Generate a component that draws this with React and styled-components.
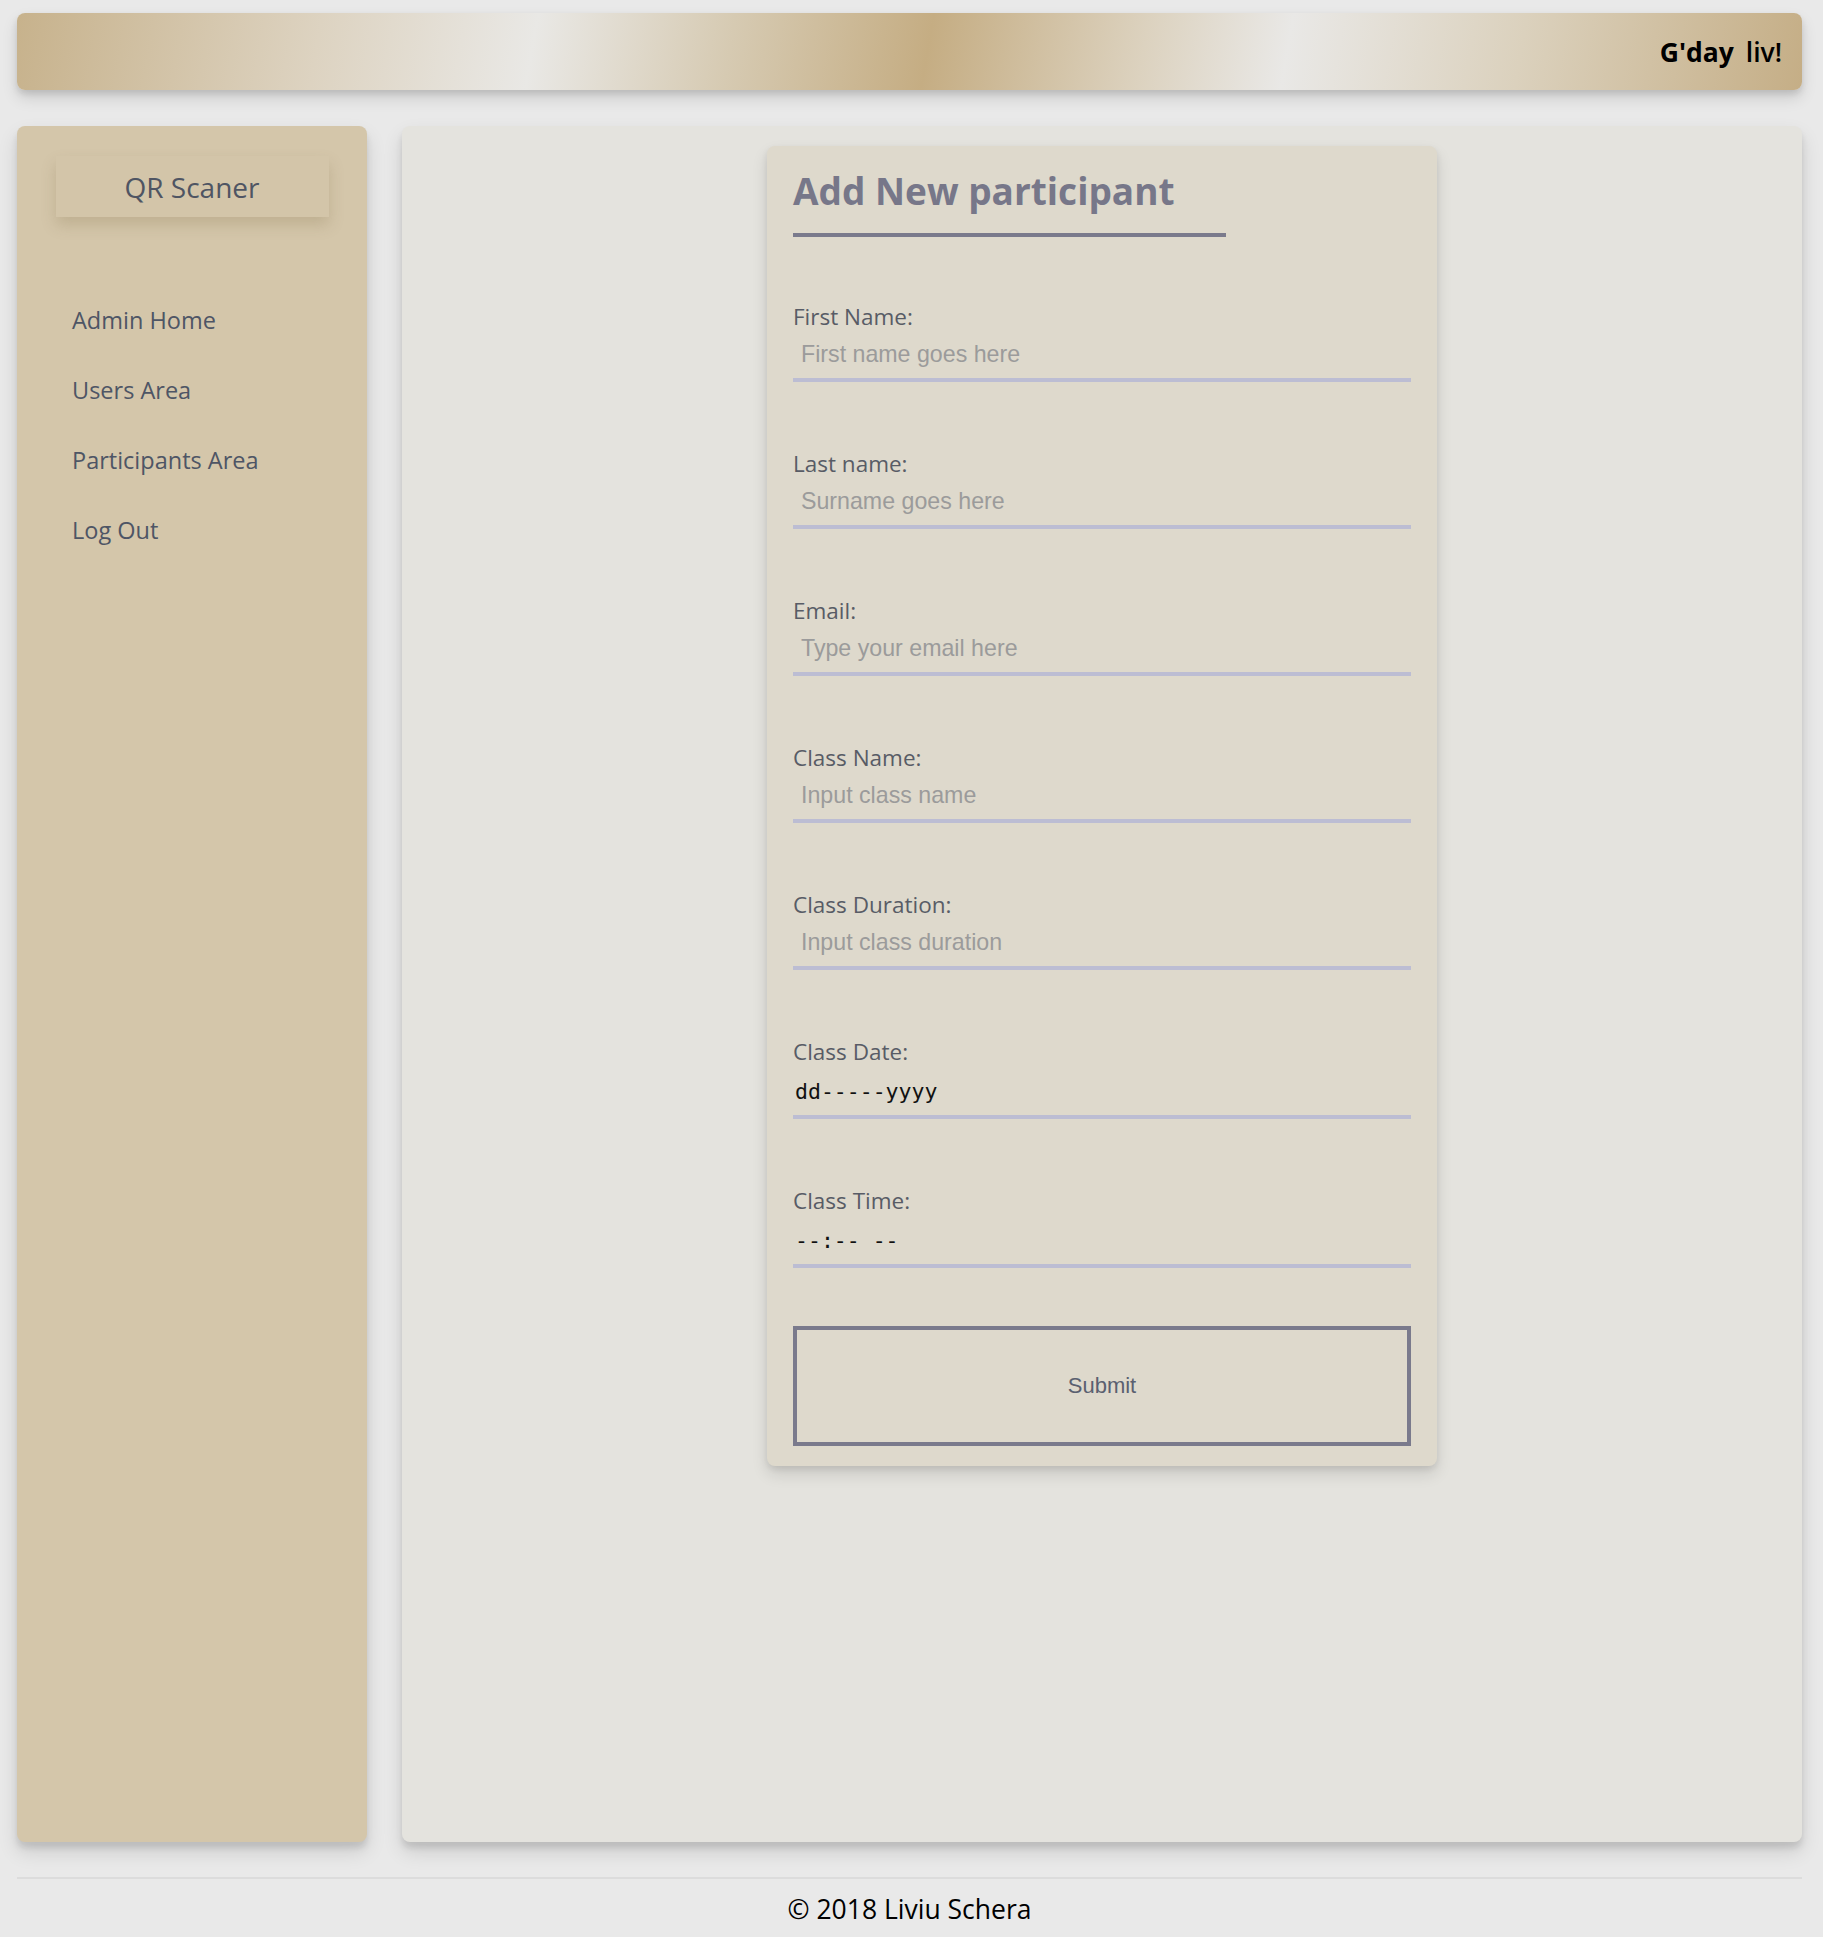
import React from "react";
import styled, { createGlobalStyle } from "styled-components";

const GlobalStyle = createGlobalStyle`
  body {
    margin: 0;
    background: #e9e9e9;
    font-family: "Open Sans", "Noto Sans", sans-serif;
  }
  * {
    box-sizing: border-box;
  }
`;

const fields = [
  { label: "First Name:", placeholder: "First name goes here" },
  { label: "Last name:", placeholder: "Surname goes here" },
  { label: "Email:", placeholder: "Type your email here" },
  { label: "Class Name:", placeholder: "Input class name" },
  { label: "Class Duration:", placeholder: "Input class duration" },
];

const navLinks = ["Admin Home", "Users Area", "Participants Area", "Log Out"];

export default function App() {
  return (
    <Page>
      <GlobalStyle />
      <Header>
        <Greeting>
          G'day <Name>liv!</Name>
        </Greeting>
      </Header>

      <Content>
        <Sidebar>
          <Brand>QR Scaner</Brand>
          <Nav>
            {navLinks.map((link) => (
              <NavItem key={link} href="#">
                {link}
              </NavItem>
            ))}
          </Nav>
        </Sidebar>

        <Main>
          <Card>
            <Title>Add New participant</Title>
            <Form onSubmit={(e) => e.preventDefault()}>
              {fields.map((f) => (
                <Field key={f.label}>
                  <Label>{f.label}</Label>
                  <Input type="text" placeholder={f.placeholder} />
                </Field>
              ))}
              <Field>
                <Label>Class Date:</Label>
                <MaskInput>dd-----yyyy</MaskInput>
              </Field>
              <Field>
                <Label>Class Time:</Label>
                <MaskInput>--:-- --</MaskInput>
              </Field>
              <SubmitButton type="submit">Submit</SubmitButton>
            </Form>
          </Card>
        </Main>
      </Content>

      <Footer>
        <FooterText>© 2018 Liviu Schera</FooterText>
      </Footer>
    </Page>
  );
}

const Page = styled.div`
  padding: 13px 21px 0 17px;
`;

const Header = styled.header`
  height: 77px;
  border-radius: 8px;
  display: flex;
  align-items: center;
  justify-content: flex-end;
  padding-right: 20px;
  background: linear-gradient(
    100deg,
    #c7b28c 0%,
    #ddd3c1 17%,
    #e9e8e5 29%,
    #d6cab2 40%,
    #c5ad83 51%,
    #dcd2bf 63%,
    #e9e8e6 71%,
    #dbd1bd 84%,
    #c5ae86 100%
  );
  box-shadow: 0 8px 16px rgba(0, 0, 0, 0.12), 0 4px 6px rgba(0, 0, 0, 0.1);
`;

const Greeting = styled.div`
  font-size: 26.5px;
  font-weight: 700;
  color: #000;
  word-spacing: 5px;
`;

const Name = styled.span`
  font-weight: 600;
`;

const Content = styled.div`
  display: flex;
  gap: 35px;
  margin-top: 36px;
  height: 1716px;
`;

const Sidebar = styled.aside`
  width: 350px;
  flex-shrink: 0;
  background: #d4c6aa;
  border-radius: 8px;
  padding-top: 30px;
  box-shadow: 0 10px 20px rgba(0, 0, 0, 0.12), 0 6px 6px rgba(0, 0, 0, 0.1);
`;

const Brand = styled.div`
  width: 273px;
  height: 61px;
  margin: 0 auto;
  display: flex;
  align-items: center;
  justify-content: center;
  background: #d3c5a9;
  font-size: 28px;
  color: #4f5563;
  box-shadow: 0 8px 14px rgba(120, 100, 60, 0.22);
`;

const Nav = styled.nav`
  display: flex;
  flex-direction: column;
  margin-top: 68px;
`;

const NavItem = styled.a`
  display: block;
  height: 70px;
  line-height: 70px;
  padding-left: 55px;
  font-size: 23.5px;
  color: #4e5565;
  text-decoration: none;
`;

const Main = styled.main`
  flex: 1;
  display: flex;
  justify-content: center;
  align-items: flex-start;
  padding-top: 20px;
  background: #e4e3de;
  border-radius: 8px;
  box-shadow: 0 10px 20px rgba(0, 0, 0, 0.12), 0 6px 6px rgba(0, 0, 0, 0.1);
`;

const Card = styled.section`
  width: 670px;
  padding: 20px 26px 20px;
  background: #ded9cc;
  border-radius: 8px;
  box-shadow: 0 8px 16px rgba(0, 0, 0, 0.12), 0 3px 6px rgba(0, 0, 0, 0.08);
`;

const Title = styled.h2`
  width: 70%;
  margin: 0;
  height: 71px;
  font-size: 37px;
  line-height: 50px;
  font-weight: 700;
  color: #777789;
  border-bottom: 4px solid #7a7a8c;
`;

const Form = styled.form`
  display: flex;
  flex-direction: column;
  padding-top: 65px;
`;

const Field = styled.div`
  display: flex;
  flex-direction: column;
  margin-bottom: 67px;
`;

const Label = styled.label`
  font-size: 22.5px;
  line-height: 30px;
  color: #585c66;
`;

const Input = styled.input`
  width: 100%;
  border: none;
  border-bottom: 4px solid #bcbdd3;
  background: transparent;
  padding: 10px 8px 11px;
  font-family: "Liberation Sans", Arial, sans-serif;
  font-size: 23.2px;
  line-height: 25px;
  color: #333;
  outline: none;

  &::placeholder {
    color: #9b9b9b;
  }
`;

const MaskInput = styled.div`
  border-bottom: 4px solid #bcbdd3;
  padding: 11px 2px 10px;
  font-family: "DejaVu Sans Mono", "Liberation Mono", monospace;
  font-size: 21.5px;
  line-height: 27px;
  color: #111;
`;

const SubmitButton = styled.button`
  height: 120px;
  margin-top: -9px;
  background: transparent;
  border: 4px solid #7a7a8c;
  font-family: "Liberation Sans", Arial, sans-serif;
  font-size: 22px;
  color: #5a6070;
  cursor: pointer;
`;

const Footer = styled.footer`
  margin-top: 35px;
  border-top: 2px solid #dcdcdc;
  padding: 14px 0 12px;
  text-align: center;
`;

const FooterText = styled.p`
  margin: 0;
  font-size: 26.5px;
  line-height: 32px;
  color: #000;
`;
